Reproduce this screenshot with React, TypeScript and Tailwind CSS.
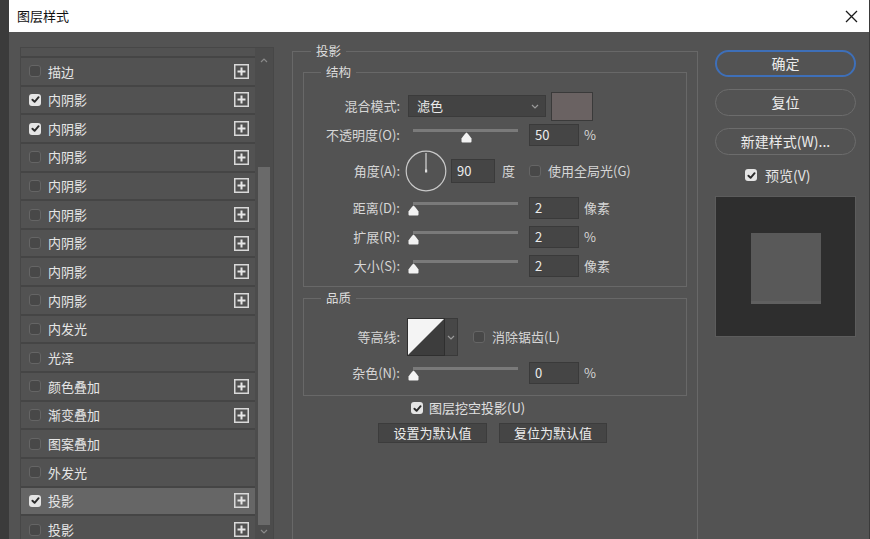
import React from "react";

type Item = { label: string; checked?: boolean; plus?: boolean; active?: boolean };

const items: Item[] = [
  { label: "描边", plus: true },
  { label: "内阴影", checked: true, plus: true },
  { label: "内阴影", checked: true, plus: true },
  { label: "内阴影", plus: true },
  { label: "内阴影", plus: true },
  { label: "内阴影", plus: true },
  { label: "内阴影", plus: true },
  { label: "内阴影", plus: true },
  { label: "内阴影", plus: true },
  { label: "内发光" },
  { label: "光泽" },
  { label: "颜色叠加", plus: true },
  { label: "渐变叠加", plus: true },
  { label: "图案叠加" },
  { label: "外发光" },
  { label: "投影", checked: true, plus: true, active: true },
  { label: "投影", plus: true },
];

function Check({ on }: { on?: boolean }) {
  if (on) {
    return (
      <span className="flex h-[12px] w-[12px] shrink-0 items-center justify-center rounded-[3px] bg-[#e4e4e4]">
        <svg width="9" height="9" viewBox="0 0 9 9">
          <path d="M1.4 4.7 L3.6 6.8 L7.6 2.2" fill="none" stroke="#2a2a2a" strokeWidth="1.9" strokeLinecap="round" strokeLinejoin="round" />
        </svg>
      </span>
    );
  }
  return <span className="h-[12px] w-[12px] shrink-0 rounded-[3px] border border-[#656565] bg-[#484848]" />;
}

function PlusBox() {
  return (
    <svg width="15" height="15" viewBox="0 0 15 15">
      <rect x="0.75" y="0.75" width="13.5" height="13.5" fill="none" stroke="#d9d9d9" strokeWidth="1.5" />
      <path d="M7.5 3.5 V11.5 M3.5 7.5 H11.5" stroke="#e6e6e6" strokeWidth="2" />
    </svg>
  );
}

function Chevron({ up, color = "#9a9a9a" }: { up?: boolean; color?: string }) {
  return (
    <svg width="8" height="5" viewBox="0 0 8 5">
      <path d={up ? "M1 4 L4 1 L7 4" : "M1 1 L4 4 L7 1"} fill="none" stroke={color} strokeWidth="1.2" />
    </svg>
  );
}

function Slider({ value }: { value: number }) {
  return (
    <div className="relative ml-[13px] h-[22px] w-[105px] pt-[5px]">
      <div className="h-[3px] w-full bg-[#7a7a7a]" />
      <svg className="absolute top-[8px]" style={{ left: (value / 100) * 105 - 5 }} width="11" height="11" viewBox="0 0 11 11">
        <path d="M5.5 0.5 Q7 1.5 10.5 6.5 L10.5 9.5 Q10.5 10.5 9.5 10.5 L1.5 10.5 Q0.5 10.5 0.5 9.5 L0.5 6.5 Q4 1.5 5.5 0.5 Z" fill="#f2f2f2" />
      </svg>
    </div>
  );
}

function NumBox({ v, w = "w-[50px]", h = "h-[22px]" }: { v: string; w?: string; h?: string }) {
  return (
    <div className={`${w} ${h} flex items-center border border-[#3a3a3a] bg-[#454545] pl-[5px] text-[13px] text-[#ececec]`}>
      {v}
    </div>
  );
}

function SliderRow({ label, value, num, unit, h = "h-[29px]" }: { label: string; value: number; num: string; unit: string; h?: string }) {
  return (
    <div className={`flex ${h} items-center`}>
      <span className="w-[96px] text-right">{label}</span>
      <Slider value={value} />
      <div className="ml-[11px]">
        <NumBox v={num} />
      </div>
      <span className="ml-[5px]">{unit}</span>
    </div>
  );
}

function RoundButton({ children, primary }: { children: React.ReactNode; primary?: boolean }) {
  return (
    <div
      className={`flex h-[27px] w-[141px] items-center justify-center rounded-full text-[14px] text-[#ececec] ${
        primary ? "border-2 border-[#3e6fb8]" : "border-[1.5px] border-[#6c6c6c]"
      }`}
    >
      {children}
    </div>
  );
}

export default function App() {
  return (
    <div className="flex h-[539px] w-[870px] overflow-hidden bg-[#3a3a3a] font-['Noto_Sans_CJK_SC','Liberation_Sans',sans-serif] text-[13px] text-[#d6d6d6]">
      <div className="w-[9px] shrink-0 bg-[#3b3b3b]" />
      <div className="flex w-[860px] flex-col bg-[#535353]">
        {/* title bar */}
        <div className="flex h-[32px] shrink-0 items-center justify-between bg-white pl-[8px] pr-[11px]">
          <span className="text-[13px] text-[#111]">图层样式</span>
          <svg width="13" height="13" viewBox="0 0 13 13">
            <path d="M1 1 L12 12 M12 1 L1 12" stroke="#1a1a1a" strokeWidth="1.3" />
          </svg>
        </div>

        <div className="flex min-h-0 flex-1 overflow-hidden pl-[11px]">
          {/* style list */}
          <div className="mt-[15px] flex h-[500px] w-[254px] shrink-0 border border-[#474747]">
            <div className="flex w-[234px] flex-col">
              <div className="h-[10px] shrink-0 border-b-2 border-[#454545] bg-[#525252]" />
              {items.map((it, i) => (
                <div
                  key={i}
                  className={`flex h-[28.65px] shrink-0 items-center border-b-2 border-[#454545] pl-[8px] pr-[6px] ${
                    it.active ? "bg-[#666666]" : "bg-[#525252]"
                  }`}
                >
                  <Check on={it.checked} />
                  <span className="ml-[7px] flex-1 text-[13px] text-[#e6e6e6]">{it.label}</span>
                  {it.plus && <PlusBox />}
                </div>
              ))}
            </div>
            <div className="flex w-[18px] flex-col items-center bg-[#4c4c4c] pt-[10px]">
              <Chevron up color="#8a8a8a" />
              <div className="mt-[104px] h-[358px] w-[12px] bg-[#6a6a6a]" />
              <div className="mt-[4px]">
                <Chevron color="#8a8a8a" />
              </div>
            </div>
          </div>

          {/* settings */}
          <fieldset className="ml-[18px] mt-[10px] h-[520px] w-[406px] shrink-0 border border-[#686868] px-[10px] pt-[3px]">
            <legend className="ml-[8px] px-[5px] text-[12.5px] leading-[18px] text-[#dcdcdc]">投影</legend>

            <fieldset className="border border-[#686868] pb-[6px] pt-[10px]">
              <legend className="ml-[17px] px-[5px] text-[12.5px] leading-[18px] text-[#dcdcdc]">结构</legend>
              <div className="flex h-[30px] items-center">
                <span className="w-[96px] text-right">混合模式:</span>
                <div className="ml-[8px] flex h-[22px] w-[138px] items-center justify-between border border-[#3b3b3b] bg-[#434343] pl-[8px] pr-[6px] text-[#ececec]">
                  <span>滤色</span>
                  <Chevron />
                </div>
                <div className="ml-[5px] h-[29px] w-[42px] border border-[#3a3a3a] bg-[#6a6262]" />
              </div>
              <SliderRow label="不透明度(O):" value={50} num="50" unit="%" h="h-[28px]" />
              <div className="flex h-[44px] items-center">
                <span className="w-[96px] text-right">角度(A):</span>
                <svg className="ml-[5px]" width="42" height="42" viewBox="0 0 42 42">
                  <circle cx="21" cy="21" r="19.8" fill="none" stroke="#c8c8c8" strokeWidth="1.2" />
                  <path d="M21 21 V3" stroke="#d8d8d8" strokeWidth="1.2" />
                  <rect x="20" y="19.5" width="2.2" height="3" fill="#e0e0e0" />
                </svg>
                <div className="ml-[4px]">
                  <NumBox v="90" w="w-[44px]" h="h-[24px]" />
                </div>
                <span className="ml-[7px]">度</span>
                <span className="ml-[14px] flex">
                  <Check />
                </span>
                <span className="ml-[7px]">使用全局光(G)</span>
              </div>
              <SliderRow label="距离(D):" value={0} num="2" unit="像素" />
              <SliderRow label="扩展(R):" value={0} num="2" unit="%" />
              <SliderRow label="大小(S):" value={0} num="2" unit="像素" />
            </fieldset>

            <fieldset className="mt-[2px] border border-[#686868] pb-[10px] pt-[11px]">
              <legend className="ml-[17px] px-[5px] text-[12.5px] leading-[18px] text-[#dcdcdc]">品质</legend>
              <div className="flex h-[38px] items-center">
                <span className="w-[96px] text-right">等高线:</span>
                <div className="ml-[7px] flex">
                  <div className="h-[38px] w-[38px] border border-[#2f2f2f] bg-[#3d3d3d]">
                    <svg width="36" height="36" viewBox="0 0 36 36">
                      <polygon points="0,36 0,0 36,0" fill="#f4f4f4" />
                    </svg>
                  </div>
                  <div className="flex h-[38px] w-[13px] items-center justify-center border border-l-0 border-[#3a3a3a] bg-[#474747]">
                    <Chevron />
                  </div>
                </div>
                <span className="ml-[15px] flex">
                  <Check />
                </span>
                <span className="ml-[7px]">消除锯齿(L)</span>
              </div>
              <div className="mt-[5px]">
                <SliderRow label="杂色(N):" value={0} num="0" unit="%" h="h-[24px]" />
              </div>
            </fieldset>

            <div className="mt-[4px] flex h-[16px] items-center pl-[108px] text-[13px] text-[#e0e0e0]">
              <Check on />
              <span className="ml-[6px]">图层挖空投影(U)</span>
            </div>
            <div className="mt-[7px] flex pl-[75px] text-[13px] text-[#ececec]">
              <div className="flex h-[20px] w-[109px] items-center justify-center border border-[#3c3c3c] bg-[#454545]">设置为默认值</div>
              <div className="ml-[12px] flex h-[20px] w-[108px] items-center justify-center border border-[#3c3c3c] bg-[#454545]">复位为默认值</div>
            </div>
          </fieldset>

          {/* buttons & preview */}
          <div className="ml-[17px] mt-[18px] flex w-[141px] shrink-0 flex-col">
            <RoundButton primary>确定</RoundButton>
            <div className="mt-[12px]">
              <RoundButton>复位</RoundButton>
            </div>
            <div className="mt-[12px]">
              <RoundButton>新建样式(W)...</RoundButton>
            </div>
            <div className="mt-[12px] flex h-[16px] items-center pl-[30px] text-[14px] text-[#e4e4e4]">
              <Check on />
              <span className="ml-[8px]">预览(V)</span>
            </div>
            <div className="mt-[13px] flex h-[141px] items-center justify-center border border-[#5c5c5c] bg-[#2e2e2e] pt-[3px]">
              <div className="h-[71px] w-[70px] border-b-[3px] border-[#606060] bg-[#595959]" />
            </div>
          </div>
        </div>
      </div>
      <div className="w-[1px] bg-[#3a3a3a]" />
    </div>
  );
}
